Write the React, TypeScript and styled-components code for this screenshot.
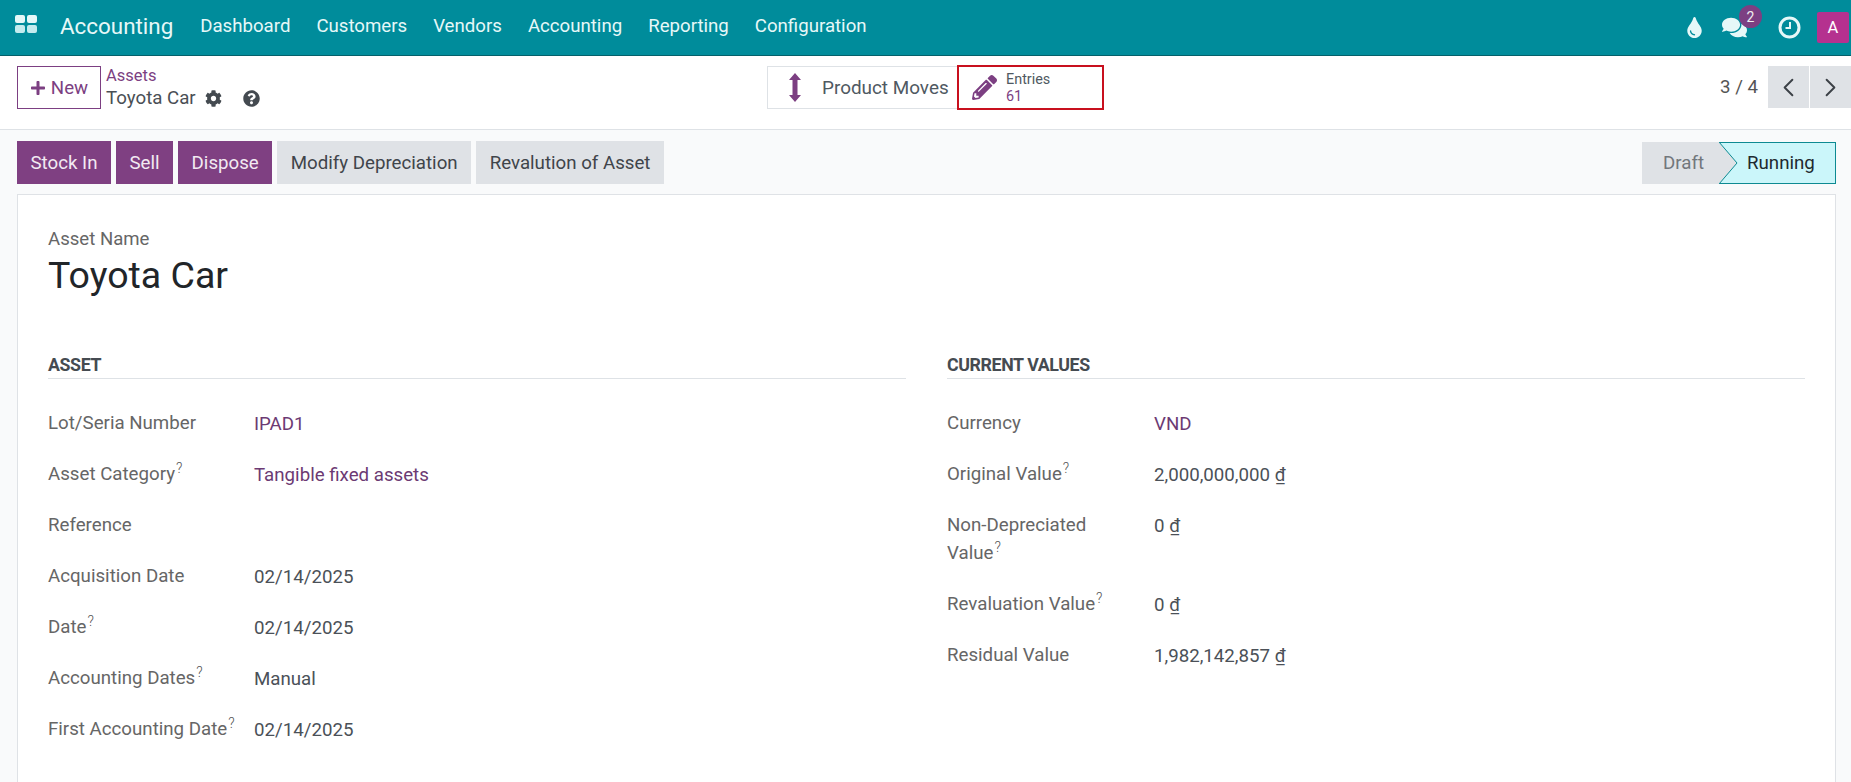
import React from 'react';
import styled, { createGlobalStyle } from 'styled-components';
import { FaPlus, FaCog, FaQuestionCircle, FaPencilAlt, FaTint, FaComments } from 'react-icons/fa';
import { ChevronLeft, ChevronRight } from 'lucide-react';

const GlobalStyle = createGlobalStyle`
  html, body { margin: 0; padding: 0; height: 100%; }
  body {
    font-family: Roboto, "Liberation Sans", sans-serif;
    font-size: 16.5px;
    color: #495057;
    background: #f9fafb;
  }
`;

const Page = styled.div`
  height: 782px;
  overflow: hidden;
  display: flex;
  flex-direction: column;
`;

const NavBar = styled.header`
  height: 55px;
  flex-shrink: 0;
  box-sizing: content-box;
  border-bottom: 1px solid #04606a;
  background: #008c9b;
  color: #e6f8f8;
  display: flex;
  align-items: center;
  padding: 0 2px 0 15px;
`;

const AppsIcon = styled.svg`
  width: 22px;
  height: 18px;
  margin-top: -7px;
`;

const Brand = styled.span`
  font-size: 22.4px;
  margin: -4px 27px 0 23px;
`;

const MenuItem = styled.span`
  font-size: 18.65px;
  margin: -4px 26px 0 0;
`;

const NavRight = styled.div`
  margin-left: auto;
  display: flex;
  align-items: center;
`;

const IconSlot = styled.span<{ $gap?: number }>`
  position: relative;
  display: flex;
  margin-left: ${({ $gap }) => $gap ?? 0}px;
  color: #e6f8f8;
`;

const Badge = styled.span`
  position: absolute;
  top: -10px;
  right: -15px;
  width: 23px;
  height: 23px;
  border-radius: 50%;
  background: #7c3f82;
  color: #eee;
  font-size: 14px;
  display: flex;
  align-items: center;
  justify-content: center;
`;

const Avatar = styled.span`
  width: 32px;
  height: 31px;
  margin-left: 16px;
  border-radius: 2px;
  background: #b5318f;
  color: #fff;
  font-size: 16.5px;
  display: flex;
  align-items: center;
  justify-content: center;
`;

const ControlPanel = styled.div`
  height: 74px;
  box-sizing: border-box;
  flex-shrink: 0;
  background: #fff;
  border-bottom: 1px solid #dee2e6;
  display: grid;
  grid-template-columns: 1fr auto 1fr;
  align-items: start;
  padding: 10px 0 0 17px;
`;

const PanelLeft = styled.div`
  display: flex;
  gap: 5px;
`;

const NewButton = styled.button`
  width: 84px;
  height: 43px;
  box-sizing: border-box;
  background: #fff;
  border: 1px solid #7c3f82;
  color: #7c3f82;
  font: inherit;
  font-size: 18.7px;
  display: flex;
  align-items: center;
  justify-content: center;
  gap: 5px;
  padding: 0;
`;

const Crumbs = styled.div`
  display: flex;
  flex-direction: column;
  line-height: 20px;
`;

const CrumbLink = styled.span`
  color: #7c3f82;
`;

const CrumbCurrent = styled.div`
  font-size: 18.7px;
  line-height: 24px;
  display: flex;
  align-items: center;
  color: #4a4f55;
`;

const CrumbIcon = styled.span<{ $gap: number }>`
  display: inline-flex;
  margin-left: ${({ $gap }) => $gap}px;
  color: #444a50;
`;

const StatButtons = styled.div`
  display: flex;
  margin-right: -3px;
`;

const MovesButton = styled.div`
  width: 190px;
  height: 43px;
  box-sizing: border-box;
  border: 1px solid #dee2e6;
  border-right: none;
  display: flex;
  align-items: center;
  padding-left: 20px;
  font-size: 18.9px;
  color: #4f5962;
`;

const MovesIcon = styled.svg`
  width: 14px;
  height: 29px;
  margin-right: 20px;
`;

const EntriesButton = styled.div`
  width: 147px;
  height: 45px;
  margin-top: -1px;
  box-sizing: border-box;
  border: 2px solid #c8101e;
  display: flex;
  align-items: center;
  padding-left: 13px;
  gap: 9px;
`;

const EntriesText = styled.div`
  font-size: 14.4px;
  line-height: 17px;
  color: #4f5962;
`;

const EntriesCount = styled.div`
  color: #7c3f82;
`;

const Pager = styled.div`
  justify-self: end;
  display: flex;
  align-items: center;
  font-size: 18.7px;
  color: #555;
`;

const PagerButton = styled.div<{ $first?: boolean }>`
  width: 41px;
  height: 42px;
  margin-left: ${({ $first }) => ($first ? 10 : 1)}px;
  background: #dfe2e6;
  display: flex;
  align-items: center;
  justify-content: center;
  color: #3c4147;
`;

const ActionBar = styled.div`
  flex-shrink: 0;
  display: flex;
  justify-content: space-between;
  padding: 11px 15px 10px 17px;
`;

const Actions = styled.div`
  display: flex;
  gap: 5px;
`;

const ActionButton = styled.button<{ $primary?: boolean }>`
  height: 43px;
  padding: 0 13.5px;
  border: none;
  font: inherit;
  font-size: 18.7px;
  background: ${({ $primary }) => ($primary ? '#7f4082' : '#dfe2e6')};
  color: ${({ $primary }) => ($primary ? '#f2eaf2' : '#3f454b')};
`;

const StatusBar = styled.div`
  display: flex;
  height: 42px;
  margin-top: 1px;
  font-size: 18.7px;
`;

const DraftStep = styled.div`
  position: relative;
  width: 77px;
  background: #dfe2e6;
  color: #72777c;
  display: flex;
  align-items: center;
  padding-left: 21px;
  box-sizing: border-box;
`;

const StepArrow = styled.svg`
  position: absolute;
  left: 100%;
  top: 0;
  width: 19px;
  height: 42px;
`;

const RunningStep = styled.div`
  width: 117px;
  box-sizing: border-box;
  background: #cbf6fa;
  border: 1px solid #0d8a92;
  border-left: none;
  color: #1f2a30;
  display: flex;
  align-items: center;
  padding-left: 28px;
`;

const Sheet = styled.main`
  flex: 1;
  margin: 0 15px 0 17px;
  background: #fff;
  border: 1px solid #dfe2e6;
  border-bottom: none;
  padding: 32px 30px 0;
`;

const FieldCaption = styled.div`
  font-size: 18.6px;
  line-height: 24px;
  color: #666;
`;

const AssetTitle = styled.h1`
  margin: 0;
  font-size: 37.5px;
  line-height: 48px;
  font-weight: 400;
  color: #212529;
`;

const Columns = styled.div`
  display: grid;
  grid-template-columns: 1fr 1fr;
  column-gap: 41px;
  margin-top: 54px;
`;

const SectionTitle = styled.h2`
  margin: 0 0 30px;
  height: 25px;
  line-height: 24px;
  font-size: 17.8px;
  font-weight: 700;
  color: #454b51;
  letter-spacing: -0.4px;
  text-transform: uppercase;
  border-bottom: 1px solid #dee2e6;
`;

const Row = styled.div<{ $labelWidth: number }>`
  display: grid;
  grid-template-columns: ${({ $labelWidth }) => $labelWidth}px 1fr;
  align-items: start;
  min-height: 51px;
  line-height: 28px;
`;

const Label = styled.div`
  justify-self: start;
  color: #666;
  font-size: 18.7px;
`;

const Hint = styled.sup`
  font-size: 14px;
  line-height: 0;
  margin-left: 1px;
  font-weight: 300;
  color: #555;
`;

const Value = styled.div<{ $link?: boolean }>`
  justify-self: start;
  font-size: 18.7px;
  color: ${({ $link }) => ($link ? '#6c3a73' : '#4b5158')};
  padding-top: 1px;
`;

const Currency = styled.span`
  text-decoration: underline;
`;

const leftRows = [
  { label: 'Lot/Seria Number', value: 'IPAD1', link: true },
  { label: 'Asset Category', hint: true, value: 'Tangible fixed assets', link: true },
  { label: 'Reference', value: '' },
  { label: 'Acquisition Date', value: '02/14/2025' },
  { label: 'Date', hint: true, value: '02/14/2025' },
  { label: 'Accounting Dates', hint: true, value: 'Manual' },
  { label: 'First Accounting Date', hint: true, value: '02/14/2025' },
];

const rightRows = [
  { label: 'Currency', value: 'VND', link: true },
  { label: 'Original Value', hint: true, value: '2,000,000,000', money: true },
  { label: 'Non-Depreciated Value', hint: true, value: '0', money: true, tall: true },
  { label: 'Revaluation Value', hint: true, value: '0', money: true },
  { label: 'Residual Value', value: '1,982,142,857', money: true },
];

const TallRow = styled(Row)`
  min-height: 79px;
`;

const NarrowLabel = styled(Label)`
  max-width: 160px;
`;

type FieldRow = { label: string; value: string; hint?: boolean; link?: boolean; money?: boolean; tall?: boolean };

const Field = ({ row, labelWidth }: { row: FieldRow; labelWidth: number }) => {
  const RowTag = row.tall ? TallRow : Row;
  const LabelTag = row.tall ? NarrowLabel : Label;
  return (
    <RowTag $labelWidth={labelWidth}>
      <LabelTag>
        {row.label}
        {row.hint && <Hint>?</Hint>}
      </LabelTag>
      <Value $link={row.link}>
        {row.value}
        {row.money && <> <Currency>₫</Currency></>}
      </Value>
    </RowTag>
  );
};

export default function App() {
  return (
    <Page>
      <GlobalStyle />
      <NavBar>
        <AppsIcon viewBox="0 0 22 18">
          <rect x="0" y="0" width="10" height="8" rx="2" fill="#e6f8f8" />
          <rect x="12" y="0" width="10" height="8" rx="2" fill="#e6f8f8" />
          <rect x="0" y="10" width="10" height="8" rx="2" fill="#c4ebee" />
          <rect x="12" y="10" width="10" height="8" rx="2" fill="#c4ebee" />
        </AppsIcon>
        <Brand>Accounting</Brand>
        {['Dashboard', 'Customers', 'Vendors', 'Accounting', 'Reporting', 'Configuration'].map((item) => (
          <MenuItem key={item}>{item}</MenuItem>
        ))}
        <NavRight>
          <IconSlot>
            <FaTint size={21} />
          </IconSlot>
          <IconSlot $gap={17}>
            <FaComments size={25} />
            <Badge>2</Badge>
          </IconSlot>
          <IconSlot $gap={31}>
            <svg width="23" height="23" viewBox="0 0 23 23" fill="none" stroke="#e6f8f8">
              <circle cx="11.5" cy="11.5" r="9.5" strokeWidth="3" />
              <path d="M12 6v6H7.5" strokeWidth="2" />
            </svg>
          </IconSlot>
          <Avatar>A</Avatar>
        </NavRight>
      </NavBar>

      <ControlPanel>
        <PanelLeft>
          <NewButton>
            <FaPlus size={16} />
            New
          </NewButton>
          <Crumbs>
            <CrumbLink>Assets</CrumbLink>
            <CrumbCurrent>
              Toyota Car
              <CrumbIcon $gap={9}><FaCog size={17} /></CrumbIcon>
              <CrumbIcon $gap={21}><FaQuestionCircle size={17} /></CrumbIcon>
            </CrumbCurrent>
          </Crumbs>
        </PanelLeft>
        <StatButtons>
          <MovesButton>
            <MovesIcon viewBox="0 0 14 29">
              <path d="M7 0l6 7H9.5v15H13l-6 7-6-7h3.5V7H1z" fill="#7c3f82" />
            </MovesIcon>
            Product Moves
          </MovesButton>
          <EntriesButton>
            <FaPencilAlt size={25} color="#7c3f82" />
            <EntriesText>
              Entries
              <EntriesCount>61</EntriesCount>
            </EntriesText>
          </EntriesButton>
        </StatButtons>
        <Pager>
          3 / 4
          <PagerButton $first><ChevronLeft size={31} strokeWidth={1.5} /></PagerButton>
          <PagerButton><ChevronRight size={31} strokeWidth={1.5} /></PagerButton>
        </Pager>
      </ControlPanel>

      <ActionBar>
        <Actions>
          <ActionButton $primary>Stock In</ActionButton>
          <ActionButton $primary>Sell</ActionButton>
          <ActionButton $primary>Dispose</ActionButton>
          <ActionButton>Modify Depreciation</ActionButton>
          <ActionButton>Revalution of Asset</ActionButton>
        </Actions>
        <StatusBar>
          <DraftStep>
            Draft
            <StepArrow viewBox="0 0 19 42">
              <path d="M0 0l18 21L0 42z" fill="#dfe2e6" />
              <path d="M0 0l18 21L0 42" fill="none" stroke="#0d8a92" strokeWidth="1" />
            </StepArrow>
          </DraftStep>
          <RunningStep>Running</RunningStep>
        </StatusBar>
      </ActionBar>

      <Sheet>
        <FieldCaption>Asset Name</FieldCaption>
        <AssetTitle>Toyota Car</AssetTitle>
        <Columns>
          <section>
            <SectionTitle>Asset</SectionTitle>
            {leftRows.map((row) => <Field key={row.label} row={row} labelWidth={206} />)}
          </section>
          <section>
            <SectionTitle>Current Values</SectionTitle>
            {rightRows.map((row) => <Field key={row.label} row={row} labelWidth={207} />)}
          </section>
        </Columns>
      </Sheet>
    </Page>
  );
}
